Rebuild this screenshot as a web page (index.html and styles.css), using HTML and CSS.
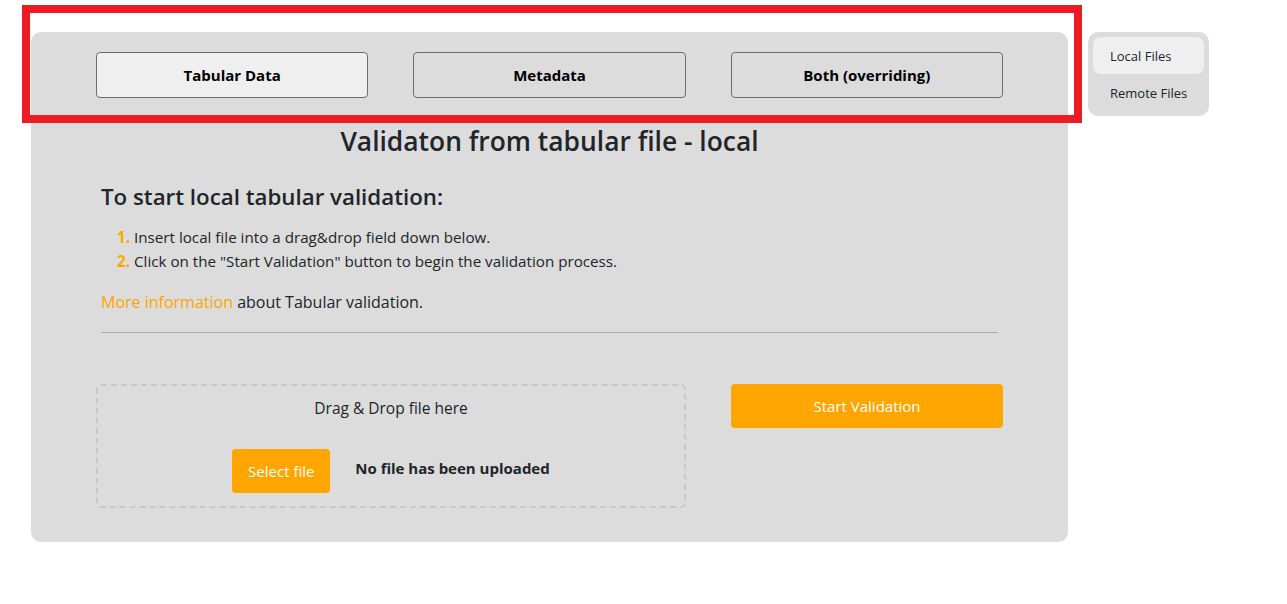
FILE: index.html
```html
<!DOCTYPE html>
<html lang="en">
<head>
<meta charset="utf-8">
<title>Validation</title>
<link rel="stylesheet" href="styles.css">
</head>
<body>
<div class="page">
  <main class="card">
    <div class="tabs">
      <button class="tab active">Tabular Data</button>
      <button class="tab">Metadata</button>
      <button class="tab">Both (overriding)</button>
    </div>
    <h1 class="title">Validaton from tabular file - local</h1>
    <section class="info">
      <h3 class="subtitle">To start local tabular validation:</h3>
      <ol class="steps">
        <li>Insert local file into a drag&amp;drop field down below.</li>
        <li>Click on the "Start Validation" button to begin the validation process.</li>
      </ol>
      <p class="more"><a class="link" href="#">More information</a> about Tabular validation.</p>
      <hr class="divider">
    </section>
    <div class="actions">
      <div class="dropzone">
        <div class="drop-text">Drag &amp; Drop file here</div>
        <div class="drop-row">
          <button class="btn-orange select">Select file</button>
          <span class="status">No file has been uploaded</span>
        </div>
      </div>
      <button class="btn-orange start">Start Validation</button>
    </div>
  </main>
  <nav class="side">
    <div class="side-item active">Local Files</div>
    <div class="side-item">Remote Files</div>
  </nav>
</div>
<div class="highlight"></div>
</body>
</html>
```
FILE: styles.css
```css
* { box-sizing: border-box; }
html, body { margin: 0; padding: 0; background: #fff; }
body {
  font-family: "Open Sans", "Noto Sans", "Liberation Sans", sans-serif;
  color: #212529;
}
.page {
  display: flex;
  align-items: flex-start;
  padding: 32px 0 0 31px;
}
.card {
  width: 1037px;
  height: 510px;
  background: #dcdcdc;
  border-radius: 10px;
  padding: 20px 65px 0 65px;
}
.tabs {
  display: grid;
  grid-template-columns: repeat(3, 1fr);
  column-gap: 45px;
}
.tab {
  height: 46px;
  background: #dcdcdc;
  border: 1px solid #6b6b6b;
  border-radius: 4px;
  font-family: inherit;
  font-weight: 700;
  font-size: 15px;
  color: #000;
}
.tab.active { background: #efefef; }
.title {
  margin: 25px 0 0 0;
  text-align: center;
  font-size: 26.4px;
  font-weight: 600;
  line-height: 36px;
}
.info { padding: 0 5px; }
.subtitle {
  margin: 23px 0 0 0;
  font-size: 22.3px;
  font-weight: 600;
  line-height: 30px;
}
.steps {
  margin: 13px 0 0 0;
  padding-left: 33px;
  font-size: 15.2px;
  line-height: 24px;
}
.steps li::marker { color: #ffa500; font-weight: 700; }
.more {
  margin: 17px 0 0 0;
  font-size: 16px;
  line-height: 24px;
}
.link { color: #ffa500; text-decoration: none; }
.divider {
  margin: 18px 0 0 0;
  border: 0;
  border-top: 1px solid #aaa;
}
.actions {
  display: grid;
  grid-template-columns: 590px 272px;
  column-gap: 45px;
  align-items: start;
  margin-top: 51px;
}
.dropzone {
  height: 124px;
  border: 2px dashed #c8c8c8;
  border-radius: 5px;
  display: flex;
  flex-direction: column;
  align-items: center;
  padding-top: 11px;
}
.drop-text { font-size: 15.5px; line-height: 22px; }
.drop-row {
  display: flex;
  align-items: center;
  gap: 25px;
  margin-top: 30px;
}
.btn-orange {
  background: #ffa500;
  border: 0;
  border-radius: 4px;
  color: #fff;
  font-family: inherit;
  font-size: 15px;
}
.select { width: 98px; height: 44px; }
.status { font-weight: 700; font-size: 15px; margin-top: -6px; }
.start { height: 44px; width: 272px; }
.side {
  margin-left: 20px;
  width: 121px;
  background: #dcdcdc;
  border-radius: 10px;
  padding: 5px;
  height: 84px;
}
.side-item {
  height: 37px;
  line-height: 38px;
  padding-left: 17px;
  font-size: 13px;
  border-radius: 8px;
}
.side-item.active { background: #efefef; }
.highlight {
  position: absolute;
  left: 22px;
  top: 5px;
  width: 1060px;
  height: 118px;
  border: 8px solid #ed1c24;
  pointer-events: none;
}
```
